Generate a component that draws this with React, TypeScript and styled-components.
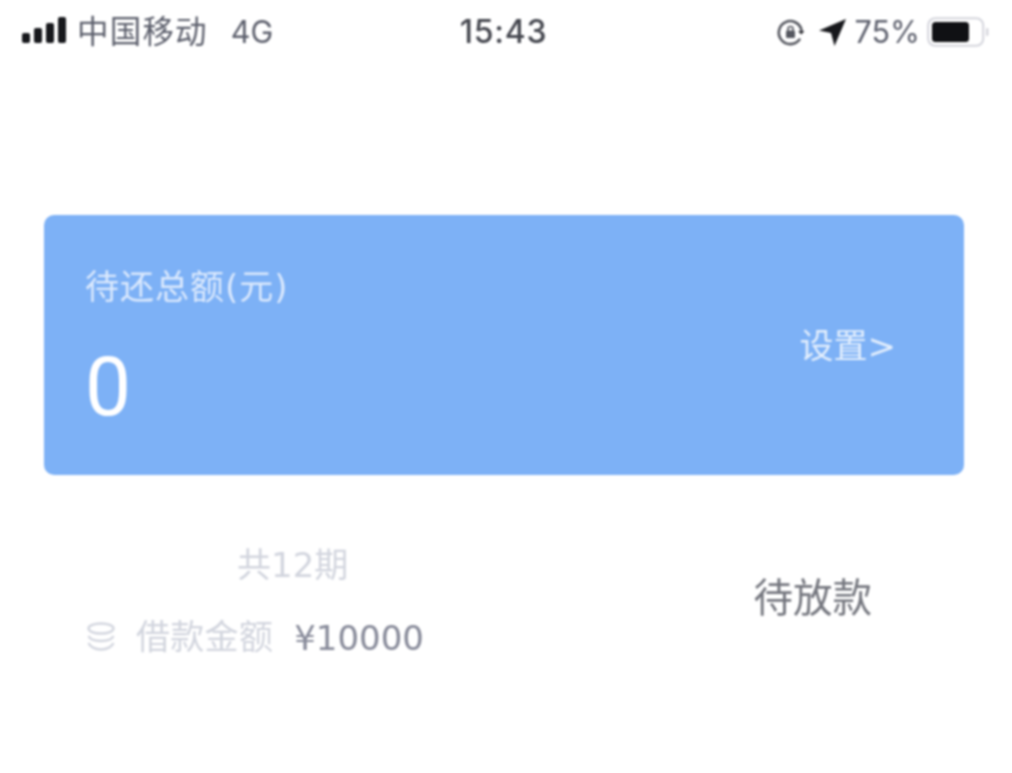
import React from "react";
import styled, { createGlobalStyle } from "styled-components";

const Global = createGlobalStyle`
  html, body { margin: 0; padding: 0; background: #fff; }
  body { font-family: "DejaVu Sans", "Noto Sans CJK SC", sans-serif; }
`;

const Page = styled.div`
  width: 1012px;
  height: 773px;
  overflow: hidden;
  background: #fff;
  filter: blur(0.8px);
  font-family: "DejaVu Sans", "Noto Sans CJK SC", sans-serif;
`;

const StatusBar = styled.header`
  display: grid;
  grid-template-columns: 1fr auto 1fr;
  align-items: center;
  height: 64px;
  padding: 0 23px 0 22px;
  color: #5c5f6c;
  font-family: "Inter", "Noto Sans CJK SC", sans-serif;
`;

const StatusSide = styled.div<{ $end?: boolean }>`
  display: flex;
  align-items: center;
  justify-content: ${(p) => (p.$end ? "flex-end" : "flex-start")};
`;

const Carrier = styled.span`
  font-size: 31.5px;
  line-height: 36px;
  margin-left: 11px;
  letter-spacing: 1.2px;
`;

const Network = styled.span`
  font-size: 30.5px;
  line-height: 36px;
  margin-left: 23px;
`;

const Clock = styled.time`
  font-size: 32px;
  font-weight: 500;
  line-height: 36px;
  color: #45474f;
  letter-spacing: 0.7px;
  margin-left: -4px;
`;

const Percent = styled.span`
  font-size: 30.5px;
  line-height: 36px;
  margin: 0 7px 0 8px;
`;

const IconGap = styled.span`
  width: 13px;
`;

const Main = styled.main`
  padding: 151px 48px 0 44px;
`;

const Card = styled.section`
  height: 260px;
  box-sizing: border-box;
  padding: 48px 68px 0 41px;
  border-radius: 10px;
  background: #7db1f6;
  display: flex;
  justify-content: space-between;
  color: #fff;
`;

const CardLabel = styled.div`
  font-size: 34px;
  line-height: 48px;
  color: #dbe9fd;
  letter-spacing: 1px;
`;

const CardAmount = styled.div`
  font-family: "Roboto", sans-serif;
  font-size: 82px;
  line-height: 94px;
  margin-top: 29px;
`;

const SettingsLink = styled.a`
  font-size: 34px;
  line-height: 48px;
  margin-top: 59px;
  color: #e4effd;
`;

const LoanRow = styled.section`
  display: flex;
  justify-content: space-between;
  align-items: center;
  padding: 68px 92px 0 43px;
`;

const LoanInfo = styled.div`
  display: flex;
  flex-direction: column;
`;

const Term = styled.div`
  font-size: 34px;
  line-height: 44px;
  color: #d2d5de;
  margin-left: 150px;
`;

const AmountLine = styled.div`
  display: flex;
  align-items: center;
  margin-top: 26px;
  height: 44px;
`;

const CoinsSlot = styled.span`
  display: flex;
  margin-top: 4px;
`;

const AmountLabel = styled.span`
  font-size: 34px;
  color: #d2d5de;
  margin-left: 21px;
  letter-spacing: 0.3px;
  margin-bottom: 2px;
`;

const AmountValue = styled.span`
  font-size: 34px;
  color: #888b9a;
  margin-left: 21px;
  margin-top: 6px;
`;

const LoanState = styled.div`
  font-size: 39.5px;
  line-height: 50px;
  color: #75777f;
  margin-top: -5px;
`;

const SignalIcon = () => (
  <svg width="44" height="30" viewBox="0 0 44 30" fill="#17181c">
    <rect x="0" y="16" width="8" height="10" rx="2" />
    <rect x="12" y="11" width="8" height="15" rx="2" />
    <rect x="24" y="6" width="8" height="20" rx="2" />
    <rect x="36" y="0" width="8" height="26" rx="2" />
  </svg>
);

const RotationLockIcon = () => (
  <svg width="30" height="30" viewBox="0 0 30 30" fill="none">
    <path d="M23.5 22.5A11.5 11.5 0 1 1 25.5 13" stroke="#55575f" strokeWidth="2.6" strokeLinecap="round" />
    <path d="M22 14h6.5l-3.2 3.6z" fill="#2a2b30" />
    <rect x="10" y="13.5" width="9" height="7.5" rx="1.2" fill="#55575f" />
    <path d="M12 14v-2a2.5 2.5 0 0 1 5 0v2" stroke="#55575f" strokeWidth="1.6" />
  </svg>
);

const LocationIcon = () => (
  <svg width="28" height="28" viewBox="0 0 28 28" fill="#17181c">
    <path d="M27 1 0 12.5l12 2.5 3.5 13z" />
  </svg>
);

const BatteryIcon = () => (
  <svg width="62" height="32" viewBox="0 0 62 32" fill="none">
    <rect x="1.2" y="2.2" width="55" height="27.6" rx="7" stroke="#d4d5dc" strokeWidth="2" />
    <rect x="5" y="6" width="37" height="20" rx="3.5" fill="#101114" />
    <rect x="59" y="12" width="2.4" height="8" rx="1.2" fill="#d4d5dc" />
  </svg>
);

const CoinsIcon = () => (
  <svg width="28" height="30" viewBox="0 0 28 30" fill="none" stroke="#d3d6df" strokeWidth="2.4">
    <ellipse cx="14" cy="6.5" rx="12.5" ry="5" />
    <path d="M1.5 14c1.5 3.2 6.5 5 12.5 5s11-1.8 12.5-5" />
    <path d="M1.5 21c1.5 3.6 6.5 6.5 12.5 6.5s11-2.9 12.5-6.5" />
  </svg>
);

export default function App() {
  return (
    <Page>
      <Global />
      <StatusBar>
        <StatusSide>
          <SignalIcon />
          <Carrier>中国移动</Carrier>
          <Network>4G</Network>
        </StatusSide>
        <Clock>15:43</Clock>
        <StatusSide $end>
          <RotationLockIcon />
          <IconGap />
          <LocationIcon />
          <Percent>75%</Percent>
          <BatteryIcon />
        </StatusSide>
      </StatusBar>
      <Main>
        <Card>
          <div>
            <CardLabel>待还总额(元)</CardLabel>
            <CardAmount>0</CardAmount>
          </div>
          <SettingsLink>设置&gt;</SettingsLink>
        </Card>
        <LoanRow>
          <LoanInfo>
            <Term>共12期</Term>
            <AmountLine>
              <CoinsSlot>
                <CoinsIcon />
              </CoinsSlot>
              <AmountLabel>借款金额</AmountLabel>
              <AmountValue>¥10000</AmountValue>
            </AmountLine>
          </LoanInfo>
          <LoanState>待放款</LoanState>
        </LoanRow>
      </Main>
    </Page>
  );
}
